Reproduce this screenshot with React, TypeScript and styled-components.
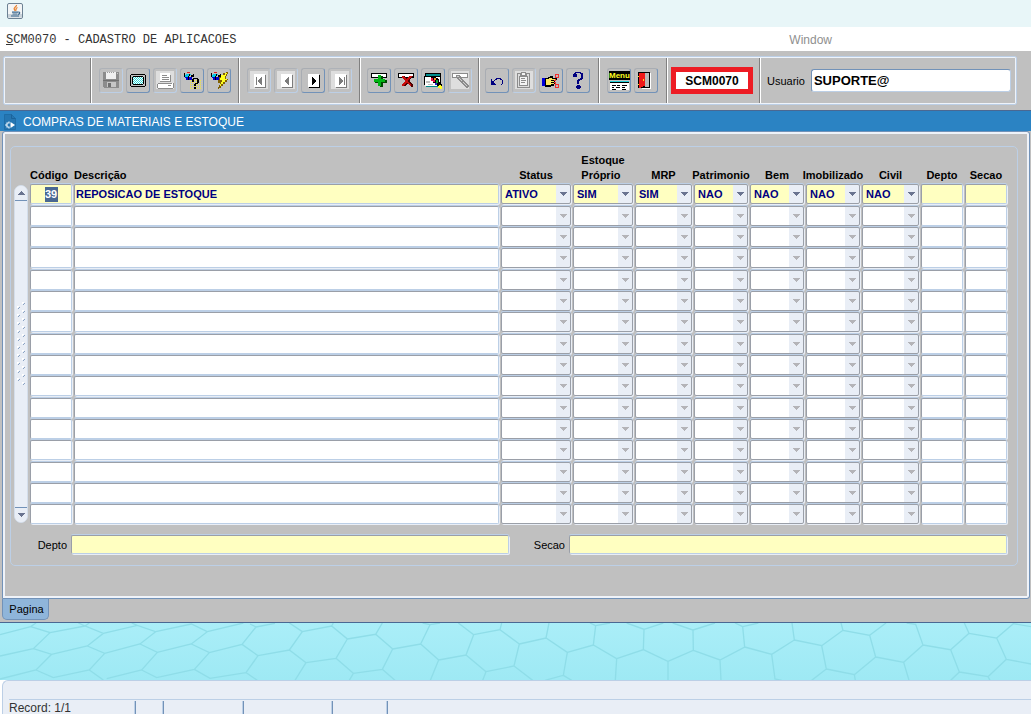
import React from 'react';
import styled, { createGlobalStyle, css } from 'styled-components';

const c = {
  gray: '#c0c0c0',
  line: '#bccfe6',
  light: '#e9eef6',
  edge: '#9a9fa8',
  blue: '#2b83c3',
  steel: '#7292b8',
  deep: '#4a6892',
  yellow: '#ffffc1',
  navy: '#000080',
};

const GlobalStyle = createGlobalStyle`
  *, *::before, *::after { box-sizing: border-box; }
  html, body { margin: 0; height: 100%; }
  body { font-family: "Liberation Sans", Arial, sans-serif; font-size: 11px; color: #000; }
  button, input, select { font: inherit; color: inherit; margin: 0; }
`;

const Page = styled.div`
  display: flex;
  flex-direction: column;
  min-height: 100vh;
  background: ${c.gray};
`;

const TitleStrip = styled.header`
  height: 27px;
  padding: 3px 7px;
  background: #e8f6f8;
`;

const MenuBar = styled.nav`
  display: flex;
  align-items: center;
  justify-content: space-between;
  height: 24px;
  padding: 1px 199px 0 6px;
  background: #fff;
`;

const MenuItem = styled.button<{ $mono?: boolean }>`
  border: 0;
  padding: 0;
  background: none;
  white-space: nowrap;
  font-size: 12px;
  line-height: 16px;
  color: #8f8f8f;
  ${p => p.$mono && css`
    font-family: "Liberation Mono", "Courier New", monospace;
    color: #333;
  `}
`;

const ToolbarArea = styled.div`
  padding: 5px 14px 5px 3px;
`;

const Toolbar = styled.div`
  display: flex;
  height: 49px;
  border: 1px solid ${c.line};
  border-radius: 2px;
  box-shadow: inset 0 0 0 1px #eef3fa;
`;

const Group = styled.div<{ $width?: number; $pad?: number }>`
  display: flex;
  align-items: center;
  gap: 3px;
  flex: ${p => (p.$width ? `0 0 ${p.$width}px` : '1 1 0')};
  margin: 1px 0;
  padding-left: ${p => p.$pad ?? 0}px;
  border-right: ${p => (p.$width ? '1px solid #fff' : '0')};
  box-shadow: ${p => (p.$width ? 'inset -1px 0 0 #808080' : 'none')};
`;

const ToolButton = styled.button`
  display: block;
  width: 24px;
  height: 25px;
  padding: 0;
  background: transparent;
  border: 1px solid;
  border-color: #a9adb3 ${c.steel} ${c.steel} #a9adb3;
  border-radius: 3px;
  &:disabled { border-color: #aeb2b8 ${c.line} ${c.line} #aeb2b8; }
  svg { display: block; }
`;

const ProgramCode = styled.output`
  display: flex;
  align-items: center;
  justify-content: center;
  width: 82px;
  height: 27px;
  border: 5px solid #ed1c24;
  background: #fff;
  font-weight: bold;
  font-size: 12px;
`;

const UserLabel = styled.label`
  margin-right: 3px;
  line-height: 16px;
`;

const UserInput = styled.input`
  flex: 1;
  min-width: 0;
  height: 23px;
  margin-right: 5px;
  padding: 0 2px;
  border: 1px solid;
  border-color: ${c.steel} ${c.line} ${c.line} ${c.steel};
  border-radius: 3px;
  background: #fff;
  font-weight: bold;
  font-size: 13px;
`;

const FormTitle = styled.h1`
  display: flex;
  align-items: center;
  gap: 7px;
  height: 21px;
  margin: 0;
  padding: 1px 4px 0;
  border-top: 1px solid ${c.deep};
  background: ${c.blue};
  color: #fff;
  font-size: 12px;
  line-height: 16px;
  font-weight: normal;
`;

const Canvas = styled.section`
  margin: 0 1px 0 2px;
  padding: 14px 11px 32px 7px;
  border: 1px solid ${c.steel};
  border-radius: 3px 3px 3px 0;
  box-shadow: inset 0 0 0 2px #eff3f9;
`;

const Frame = styled.div`
  padding: 0 9px 11px 3px;
  border: 1px solid ${c.line};
  border-radius: 5px;
`;

const RecordsBlock = styled.div`
  display: flex;
`;

const ScrollBar = styled.div`
  display: flex;
  flex-direction: column;
  flex: 0 0 14px;
  width: 14px;
  margin: 38px 1px 3px 0;
  border: 1px solid #d4deeb;
  border-radius: 7px;
  background: ${c.light};
  overflow: hidden;
`;

const ScrollButton = styled.button<{ $down?: boolean }>`
  display: flex;
  align-items: center;
  justify-content: center;
  height: 15px;
  padding: 0;
  border: 0;
  border-top: ${p => (p.$down ? `1px solid ${c.steel}` : '0')};
  border-bottom: ${p => (p.$down ? '0' : `1px solid ${c.steel}`)};
  background: ${c.light};
`;

const Thumb = styled.div`
  display: flex;
  flex: 1;
  align-items: center;
  justify-content: center;
  padding-bottom: 20px;
`;

const Grid = styled.table`
  flex: 1;
  width: 100%;
  table-layout: fixed;
  border-collapse: collapse;
  th { height: 37px; padding: 0 1px; vertical-align: bottom; }
  td { padding: 0 1px 1px; height: 21px; vertical-align: top; }
  tbody tr:nth-child(3n + 1) td { height: 22px; }
`;

const HeadLabel = styled.div<{ $left?: boolean }>`
  display: flex;
  justify-content: ${p => (p.$left ? 'flex-start' : 'center')};
  padding-bottom: 1px;
  font-weight: bold;
  font-size: 11px;
  line-height: 15px;
  text-align: left;
  white-space: pre;
`;

const fieldText = css`
  color: ${c.navy};
  font-weight: bold;
  font-size: 11px;
`;

const fieldBox = css`
  border: 1px solid;
  border-radius: 2px;
  box-shadow: 1px 1px 0 ${c.light}, 0 -1px 0 ${c.line};
`;

const Cell = styled.input<{ $active?: boolean; $marked?: boolean }>`
  ${fieldText}
  ${fieldBox}
  display: block;
  width: 100%;
  height: 20px;
  padding: 0 1px;
  border-color: ${c.edge} ${c.line} ${c.line} ${c.edge};
  background: ${p => (p.$active ? c.yellow : '#fff')};
  ${p => p.$marked && css`
    text-align: center;
    color: #fff;
    background: linear-gradient(${c.deep}, ${c.deep}) center / 13px 15px no-repeat ${c.yellow};
  `}
`;

const Combo = styled.div<{ $active?: boolean }>`
  ${fieldBox}
  display: grid;
  grid-template-columns: 1fr 14px;
  height: 20px;
  border-color: ${c.edge};
  background: linear-gradient(${c.light}, ${c.light}) right / 14px 100% no-repeat ${p => (p.$active ? c.yellow : '#fff')};
  select {
    ${fieldText}
    grid-area: 1 / 1 / 2 / 3;
    width: 100%;
    padding: 0 3px;
    border: 0;
    appearance: none;
    background: none;
    opacity: 1;
  }
  svg {
    grid-area: 1 / 2;
    place-self: center;
    pointer-events: none;
  }
`;

const Details = styled.div`
  display: grid;
  grid-template-columns: 57px 1fr 60px 1fr;
  align-items: center;
  margin: 9px 1px 0 0;
  label { justify-self: end; padding-right: 4px; }
`;

const DetailInput = styled.input`
  ${fieldText}
  ${fieldBox}
  width: 100%;
  height: 19px;
  padding: 0 3px;
  border-color: ${c.edge} ${c.line} ${c.line} ${c.edge};
  background: ${c.yellow};
`;

const TabStrip = styled.div`
  height: 24px;
  padding-left: 2px;
  border-bottom: 1px solid ${c.deep};
`;

const Tab = styled.button`
  display: block;
  width: 47px;
  height: 21px;
  padding: 0 0 0 2px;
  border: 1px solid ${c.steel};
  border-top: 0;
  border-radius: 0 0 5px 5px;
  background: #8fb5da;
`;

const Backdrop = styled.div`
  flex: 1;
  min-height: 57px;
  background: linear-gradient(#aaeef8, #9ee9f4);
  overflow: hidden;
  svg { display: block; width: 100%; height: 57px; }
`;

const StatusArea = styled.footer`
  background: #fff;
`;

const StatusBar = styled.div`
  margin-left: 2px;
  padding: 18px 0 0 6px;
  border: 1px solid ${c.line};
  border-width: 1px 0 0 1px;
  border-radius: 6px 0 0 0;
  background: ${c.light};
`;

const StatusCells = styled.div`
  display: flex;
  height: 15px;
  padding-top: 1px;
  border-top: 1px solid ${c.line};
`;

const StatusCell = styled.span<{ $width: number }>`
  width: ${p => p.$width}px;
  padding-top: 1px;
  border-right: 1px solid ${c.steel};
  box-shadow: inset -1px 0 0 ${c.line};
  font-size: 12px;
  line-height: 12px;
  color: #333;
`;

const JavaIcon = () => (
  <svg width="16" height="16" viewBox="0 0 16 16" aria-hidden="true">
    <rect x="0.5" y="0.5" width="15" height="15" rx="1.5" fill="#f3f5f6" stroke="#6d8294" />
    <path d="M1 11h14v3.5H1z" fill="#c9d3da" />
    <path d="M9.500 2c.6 1.800-3.400 2.600-2.200 4.400l1 1.600M10.500 4.500c-2 .9-1.800 1.500-1.200 2.900" fill="none" stroke="#e8822f" strokeWidth="1.300" />
    <path d="M5 9.200h6M5.500 11h5M4 13h8M11.200 9.200c2.300-.5 1.700 2-.2 2.200" fill="none" stroke="#3b678c" strokeWidth="1.200" />
  </svg>
);

const FormIcon = () => (
  <svg width="12" height="16" viewBox="0 0 12 16" aria-hidden="true">
    <path d="M0.500 0.500h7l4 4v11h-11z" fill="#2576b2" stroke="#1f6da7" />
    <path d="M7.500 0.500v4h4" fill="none" stroke="#1b639b" />
    <path d="M5 7.500v1.500H3v4h2v1.500M1 11h2" fill="none" stroke="#e6f1fa" strokeWidth="1.200" />
    <path d="M6.500 8l4.500 3-4.500 3z" fill="#fff" />
  </svg>
);

const Glyph = ({ children }: { children: React.ReactNode }) => (
  <svg width="22" height="23" viewBox="1 1 22 23" shapeRendering="crispEdges" aria-hidden="true">{children}</svg>
);

const Pad = () => <path fill="#dedede" d="M3 3h18v18H3z" />;

type DitherProps = { color: string; x: number; y: number; w: number; h: number; sparse?: boolean };

const Dither = ({ color, x, y, w, h, sparse }: DitherProps) => {
  let d = '';
  for (let j = 0; j < h; j += sparse ? 2 : 1) {
    for (let i = j % 2; i < w; i += 2) d += `M${x + i} ${y + j}h1v1h-1z`;
  }
  return <path fill={color} d={d} />;
};

const SaveIcon = () => (
  <Glyph>
    <path fill="#8c8c8c" d="M4 4h16v16H5v-1H4z" />
    <path fill="#f0f0f0" d="M7 4h10v7H7z" />
    <path fill="#9c9c9c" d="M8 4h1v1H8zM10 4h1v1h-1zM12 4h1v1h-1zM14 4h1v1h-1z" />
    <path fill="#c6c6c6" d="M8 14h9v5H8zM18 5h1v1h-1z" />
    <path fill="#707070" d="M9 15h3v4H9zM4 12h16v1H4z" />
  </Glyph>
);

const ScreenIcon = () => (
  <Glyph>
    <path fill="#000" d="M5 6h14v1H5zM5 18h14v1H5zM4 7h1v11H4zM19 7h1v11h-1zM7 8h10v1H7zM7 16h10v1H7zM6 9h1v7H6zM17 9h1v7h-1z" />
    <path fill="#fff" d="M7 9h10v7H7z" />
    <Dither color="#30d8d8" x={7} y={9} w={10} h={7} />
  </Glyph>
);

const PrintIcon = () => (
  <Glyph>
    <Pad />
    <path fill="#fff" d="M7 5h10v8H7zM5 15h15v5H5z" />
    <path fill="#8c8c8c" d="M9 7h5v1H9zM9 9h7v1H9zM9 11h7v1H9zM17 7h1v7h-1zM7 13h11v1H7zM5 15h14v1H5zM4 16h1v4H4zM5 20h15v1H5zM15 17h3v1h-3zM20 15h1v5h-1z" />
  </Glyph>
);

const Torch = () => (
  <>
    <path fill="#00c8e8" d="M6 6h5v1H6zM5 7h4v2H5z" />
    <path fill="#0000d0" d="M5 9h3v1H5zM6 10h2v2H6zM9 9h3v3H9z" />
    <path fill="#000" d="M4 5h1v4H4zM9 6h1v2H9zM11 7h2v2h-2zM8 8h1v4H8zM13 6h1v3h-1z" />
    <path fill="#e02020" d="M7 4h3v1H7z" />
  </>
);

const EnterQueryIcon = () => (
  <Glyph>
    <Dither color="#f0e840" x={10} y={12} w={12} h={10} sparse />
    <Torch />
    <path fill="#000" d="M13 10h5v1h-5zM12 11h2v3h-2zM17 11h2v4h-2zM15 15h3v1h-3zM14 16h2v2h-2zM14 19h2v2h-2z" />
  </Glyph>
);

const ExecuteQueryIcon = () => (
  <Glyph>
    <Torch />
    <path fill="#806000" d="M19 4h2v2h-1v2h-1v3h2v1h-1v2h-2v2h-2v2h-2v2h-2v1h-1v-2h1v-2h1v-2h-2v-3h1v-3h2V7h2V5h2z" />
    <path fill="#ffff20" d="M18 5h2v1h-1v2h-1v3h2v1h-2v2h-2v2h-2v2h-1v-2h1v-2h1v-2h-2v-2h1v-3h2V7h2z" />
  </Glyph>
);

const NavIcon = ({ kind }: { kind: 'first' | 'prev' | 'next' | 'last' }) => {
  const off = kind !== 'next';
  const left = kind === 'first' || kind === 'prev';
  return (
    <Glyph>
      {off && <Pad />}
      <path fill="#fff" d="M7 6h11v13H7z" />
      <path fill={off ? '#7c7c7c' : '#000'} d="M18 7h1v13H8v-1h10z" />
      <path
        fill={off ? '#7c7c7c' : '#000'}
        d={left
          ? 'M14 9h1v8h-1v-1h-1v-1h-1v-1h-1v-2h1v-1h1v-1h1z'
          : 'M11 9h1v1h1v1h1v1h1v2h-1v1h-1v1h-1v1h-1z'}
      />
      {kind === 'first' && <path fill="#7c7c7c" d="M9 9h1v8H9z" />}
      {kind === 'last' && <path fill="#7c7c7c" d="M16 9h1v8h-1z" />}
    </Glyph>
  );
};

const RowStrip = () => (
  <>
    <path fill="#000" d="M4 5h16v5H4z" />
    <path fill="#fff" d="M5 6h14v3H5z" />
  </>
);

const InsertIcon = () => (
  <Glyph>
    <RowStrip />
    <path fill="#004800" d="M12 8h4v4h4v3h-4v4h-3v-4H8v-3h4z" />
    <path fill="#00b414" d="M11 7h3v4h4v3h-4v4h-3v-4H7v-3h4z" />
  </Glyph>
);

const DeleteIcon = () => (
  <Glyph>
    <RowStrip />
    <path fill="#500000" d="M9 8h2v1h1v1h2V9h1V8h4v1h-1v1h-1v1h-1v3h1v1h1v1h1v3h-2v-1h-1v-1h-1v-1h-2v1h-1v1H8v-2h1v-1h1v-1h1v-2h-1v-1H9z" />
    <path fill="#c80c0c" d="M8 8h2v1h1v1h1v1h1v-1h1V9h1V8h3v1h-1v1h-1v1h-1v1h-1v2h1v1h1v1h1v2h-1v-1h-1v-1h-1v-1h-2v1h-1v1h-1v1H8v-2h1v-1h1v-1h1v-2h-1v-1H9v-1H8z" />
  </Glyph>
);

const ClearFormIcon = () => (
  <Glyph>
    <path fill="#000" d="M4 5h16v12H3V8h1z" />
    <path fill="#fff" d="M4 9h15v9H4z" />
    <path fill="#008c8c" d="M5 6h14v2H5zM5 18h14v1H5z" />
    <path fill="#c0c0c0" d="M5 13h4v2H5zM7 16h5v1H7z" />
    <path fill="#000" d="M10 9h5v1h2v1h1v3h2v2h1v3h-3v-1h-2v-2h-2v-1h-2v-2h-2z" />
    <path fill="#e8104c" d="M10 10h2v3h-2zM12 12h2v2h-2z" />
    <path fill="#f09020" d="M13 10h2v2h-2z" />
    <path fill="#10a030" d="M15 12h2v3h-2z" />
    <path fill="#2020d0" d="M14 15h2v2h-2z" />
    <path fill="#ffff20" d="M18 17h2v1h1v3h-2v-1h-2v-2h1z" />
  </Glyph>
);

const ClearFieldIcon = () => (
  <Glyph>
    <Pad />
    <path fill="#8c8c8c" d="M4 5h16v5H4z" />
    <path fill="#fff" d="M5 6h14v3H5z" />
    <path fill="#8c8c8c" d="M8 7h4v1h1v2h1v1h1v1h1v1h1v1h1v1h1v1h1v1h1v2h-1v1h-2v-1h-1v-1h-1v-1h-1v-1h-1v-1h-1v-1h-1v-1h-1v-1h-1v-1H9v-1H8z" />
    <path fill="#d0d0d0" d="M9 8h2v1H9zM11 10h1v1h1v1h1v1h-1v-1h-1v-1h-1zM15 14h1v1h1v1h1v1h1v1h-1v-1h-1v-1h-1v-1h-1z" />
  </Glyph>
);

const UndoIcon = () => (
  <Glyph>
    <path fill={c.navy} d="M6 11h1v2h1v1h1v1h1v1h1v1H6zM9 12h1v1H9zM8 13h1v1H8zM10 11h2v1h-2zM11 10h5v1h-5zM15 11h2v1h-2zM17 12h1v4h-1zM16 16h1v1h-1z" />
  </Glyph>
);

const PasteIcon = () => (
  <Glyph>
    <Pad />
    <path fill="#8c8c8c" d="M5 5h4V4h5v1h4v15H5z" />
    <path fill="#dedede" d="M6 6h11v13H6z" />
    <path fill="#8c8c8c" d="M8 6h7v2h1v10H7V8h1z" />
    <path fill="#f4f4f4" d="M8 9h7v8H8zM10 5h3v2h-3z" />
    <path fill="#8c8c8c" d="M9 10h4v1H9zM9 12h5v1H9zM9 14h4v1H9z" />
  </Glyph>
);

const CutIcon = () => (
  <Glyph>
    <path fill="#0000d8" d="M3 10h3v8H3z" />
    <path fill="#000" d="M6 10h3V9h2V8h3v2h4v2h-2v2h1v2h-2v2h-3v1H6z" />
    <path fill="#ffe860" d="M7 11h3v-1h3v1h4v1h-5v1h3v1h-3v1h3v1h-3v1H7z" />
    <path fill="none" stroke="#f03030" d="M15.500 12.500l2-1M15.500 14.500l2 1M16.500 9.500v-3h3v3zM16.500 16.500v3h3v-3z" />
  </Glyph>
);

const HelpIcon = () => (
  <Glyph>
    <path fill={c.navy} d="M9 4h6v1h2v6h-1v1h-2v1h-1v3h-2v-4h1v-1h2v-1h1V6h-1V5h-4v1h1v3H7V6h1V5h1zM11 17h3v1h1v2h-1v1h-3v-1h-1v-2h1z" />
  </Glyph>
);

const MenuIcon = () => (
  <Glyph>
    <path fill="#000" d="M2 3h21v9H2z" />
    <text x="2" y="10" fill="#ffff20" fontFamily="Liberation Sans, Arial, sans-serif" fontSize="8" fontWeight="bold">Menu</text>
    <path fill="#20d0d8" d="M3 13h19v1H3z" />
    <path fill="#fff" d="M3 15h19v7H3z" />
    <path fill="#000" d="M3 14h19v1H3zM5 17h4v1H5zM10 17h3v1h-3zM15 17h5v1h-5zM5 19h2v1H5zM9 19h4v1H9zM15 19h3v1h-3zM5 21h4v1H5zM15 21h4v1h-4z" />
  </Glyph>
);

const ExitIcon = () => (
  <Glyph>
    <path fill="#000" d="M4 4h12v16H4z" />
    <path fill="#fff" d="M16 5h1v16H8v-1h8z" />
    <path fill="#b8b8b8" d="M11 5h4v14h-4z" />
    <path fill="#f01818" d="M5 5h6v13H9v1H7v1H5z" />
    <path fill="#ffe020" d="M4 8h1v1H4zM4 16h1v1H4zM9 11h1v2H9z" />
  </Glyph>
);

const Triangle = ({ color, up }: { color: string; up?: boolean }) => (
  <svg width="7" height="4" viewBox="0 0 7 4" shapeRendering="crispEdges" aria-hidden="true">
    <path fill={color} d={up ? 'M3 0h1v1h1v1h1v1h1v1H0V3h1V2h1V1h1z' : 'M0 0h7v1H6v1H5v1H4v1H3V3H2V2H1V1H0z'} />
  </svg>
);

const Grip = () => (
  <svg width="8" height="84" viewBox="0 0 8 84" shapeRendering="crispEdges" aria-hidden="true">
    {Array.from({ length: 21 }, (_, i) => {
      const x = i % 2 ? 0 : 5;
      return (
        <g key={i}>
          <path fill="#fff" d={`M${x} ${i * 4}h2v1h-1v1h-1z`} />
          <path fill="#8aa3c4" d={`M${x + 1} ${i * 4 + 2}h1v-1h1v1h-1v1h-1z`} />
        </g>
      );
    })}
  </svg>
);

const hexPaths = [
  'M0 35L92 11L108 0M92 11L150 29L100 77L0 99M150 29L255 9L310 31L262 69L155 94L100 77M255 9L268 0M255 9L235 0',
  'M310 31L412 7L467 26L420 63L314 91L262 69M412 7L395 0M467 26L574 3L622 26L574 63L472 88L420 63M622 26L730 0',
  'M768 12L750 3M768 12L726 64L628 89L574 63M768 12L825 1M726 64L774 98L738 149L772 172',
  'M155 94L108 141L0 168M108 141L160 164L268 141L314 91M268 141L310 171M472 88L425 141L320 167M425 141L470 164L583 139L628 89M583 139L630 166L738 149',
  'M774 98L868 81L918 119L885 172M868 81L907 26L995 9L1042 48L1008 106L918 119M907 26L868 0M995 9L1000 0',
  'M1042 48L1127 34L1178 78L1147 139L1060 151L1008 106M1060 151L1048 172M1127 34L1147 0M1178 78L1262 63L1316 111L1291 172M1147 139L1185 172M1262 63L1290 5L1268 0M1290 5L1320 0',
  'M1316 111L1398 96L1458 146L1448 172M1398 96L1421 35L1375 0M1421 35L1500 20L1505 0M1500 20L1558 63L1542 129L1458 146M1542 129L1598 172',
  'M1558 63L1638 45L1702 88L1690 157L1635 172M1690 157L1715 172M1638 45L1647 0M1702 88L1780 66L1850 107L1846 172M1780 66L1787 8L1770 0M1787 8L1830 0',
  'M1850 107L1930 80L1932 19L1880 0M1932 19L1990 0M1930 80L2004 115V172M2004 115L2080 82L2079 21L2018 0M2079 21L2145 0',
  'M2228 11L2205 0M2228 11L2275 0M2228 11L2234 72L2160 111L2080 82M2160 111L2163 172M2234 72L2315 94L2325 168L2345 172M2315 94L2383 51L2376 0',
  'M2383 51L2465 68L2479 138L2435 172M2479 138L2563 155L2566 172M2563 155L2627 102L2609 37L2529 22L2523 0M2529 22L2465 68M2609 37L2658 0',
  'M2627 102L2711 118L2727 172M2711 118L2769 66L2747 4L2720 0M2769 66L2852 80L2907 31L2893 0M2852 80L2878 147L2852 172M2878 147L2964 161L2970 172M2964 161L3019 109L2990 45L2907 31M2990 45L3040 2L3093 11M3019 109L3093 123',
];

type Tool = { label: string; icon: React.ReactNode; off?: boolean };

const toolGroups: { width: number; pad: number; tools: Tool[] }[] = [
  { width: 148, pad: 7, tools: [
    { label: 'Salvar', icon: <SaveIcon />, off: true },
    { label: 'Tela', icon: <ScreenIcon /> },
    { label: 'Imprimir', icon: <PrintIcon />, off: true },
    { label: 'Entrar consulta', icon: <EnterQueryIcon /> },
    { label: 'Executar consulta', icon: <ExecuteQueryIcon /> },
  ] },
  { width: 121, pad: 7, tools: [
    { label: 'Primeiro', icon: <NavIcon kind="first" />, off: true },
    { label: 'Anterior', icon: <NavIcon kind="prev" />, off: true },
    { label: 'Próximo', icon: <NavIcon kind="next" /> },
    { label: 'Último', icon: <NavIcon kind="last" />, off: true },
  ] },
  { width: 119, pad: 6, tools: [
    { label: 'Inserir', icon: <InsertIcon /> },
    { label: 'Excluir', icon: <DeleteIcon /> },
    { label: 'Limpar tela', icon: <ClearFormIcon /> },
    { label: 'Limpar campo', icon: <ClearFieldIcon />, off: true },
  ] },
  { width: 120, pad: 5, tools: [
    { label: 'Desfazer', icon: <UndoIcon /> },
    { label: 'Colar', icon: <PasteIcon />, off: true },
    { label: 'Recortar', icon: <CutIcon /> },
    { label: 'Ajuda', icon: <HelpIcon /> },
  ] },
  { width: 68, pad: 7, tools: [
    { label: 'Menu', icon: <MenuIcon /> },
    { label: 'Sair', icon: <ExitIcon /> },
  ] },
];

type Column = { title: string; width?: number; combo?: boolean; left?: boolean; value: string };

const columns: Column[] = [
  { title: 'Código', width: 44, left: true, value: '39' },
  { title: 'Descrição', left: true, value: 'REPOSICAO DE ESTOQUE' },
  { title: 'Status', width: 72, combo: true, value: 'ATIVO' },
  { title: 'Estoque\nPróprio', width: 62, combo: true, value: 'SIM' },
  { title: 'MRP', width: 59, combo: true, value: 'SIM' },
  { title: 'Patrimonio', width: 56, combo: true, value: 'NAO' },
  { title: 'Bem', width: 56, combo: true, value: 'NAO' },
  { title: 'Imobilizado', width: 56, combo: true, value: 'NAO' },
  { title: 'Civil', width: 59, combo: true, value: 'NAO' },
  { title: 'Depto', width: 44, value: '' },
  { title: 'Secao', width: 44, value: '' },
];

const ROWS = 16;

export default function App() {
  return (
    <Page>
      <GlobalStyle />
      <TitleStrip><JavaIcon /></TitleStrip>
      <MenuBar>
        <MenuItem $mono><u>S</u>CM0070 - CADASTRO DE APLICACOES</MenuItem>
        <MenuItem>Window</MenuItem>
      </MenuBar>
      <ToolbarArea>
        <Toolbar>
          <Group $width={88} />
          {toolGroups.map((g, i) => (
            <Group key={i} $width={g.width} $pad={g.pad}>
              {g.tools.map(t => (
                <ToolButton key={t.label} aria-label={t.label} disabled={t.off}>{t.icon}</ToolButton>
              ))}
            </Group>
          ))}
          <Group $width={93} $pad={3}><ProgramCode>SCM0070</ProgramCode></Group>
          <Group $pad={6}>
            <UserLabel htmlFor="usuario">Usuario</UserLabel>
            <UserInput id="usuario" defaultValue="SUPORTE@" />
          </Group>
        </Toolbar>
      </ToolbarArea>
      <FormTitle><FormIcon />COMPRAS DE MATERIAIS E ESTOQUE</FormTitle>
      <Canvas>
        <Frame>
          <RecordsBlock>
            <ScrollBar>
              <ScrollButton aria-label="Subir"><Triangle color="#6a7490" up /></ScrollButton>
              <Thumb><Grip /></Thumb>
              <ScrollButton $down aria-label="Descer"><Triangle color="#6a7490" /></ScrollButton>
            </ScrollBar>
            <Grid>
              <colgroup>
                {columns.map(col => <col key={col.title} width={col.width} />)}
              </colgroup>
              <thead>
                <tr>
                  {columns.map(col => (
                    <th key={col.title} scope="col"><HeadLabel $left={col.left}>{col.title}</HeadLabel></th>
                  ))}
                </tr>
              </thead>
              <tbody>
                {Array.from({ length: ROWS }, (_, r) => (
                  <tr key={r}>
                    {columns.map((col, i) => {
                      const active = r === 0;
                      const name = `${col.title.replace('\n', ' ')} ${r + 1}`;
                      return (
                        <td key={col.title}>
                          {col.combo ? (
                            <Combo $active={active}>
                              <select aria-label={name} disabled={!active}>
                                <option>{active ? col.value : ''}</option>
                              </select>
                              <Triangle color={active ? '#6a7490' : '#b4b4b8'} />
                            </Combo>
                          ) : (
                            <Cell
                              aria-label={name}
                              $active={active}
                              $marked={active && i === 0}
                              defaultValue={active ? col.value : ''}
                            />
                          )}
                        </td>
                      );
                    })}
                  </tr>
                ))}
              </tbody>
            </Grid>
          </RecordsBlock>
          <Details>
            <label htmlFor="depto">Depto</label>
            <DetailInput id="depto" />
            <label htmlFor="secao">Secao</label>
            <DetailInput id="secao" />
          </Details>
        </Frame>
      </Canvas>
      <TabStrip><Tab>Pagina</Tab></TabStrip>
      <Backdrop>
        <svg viewBox="0 0 3093 171" preserveAspectRatio="xMinYMin slice" aria-hidden="true">
          <path d={hexPaths.join('')} fill="none" stroke="#8fdde8" strokeWidth="4" />
        </svg>
      </Backdrop>
      <StatusArea>
        <StatusBar>
          <StatusCells>
            <StatusCell $width={127}>Record: 1/1</StatusCell>
            <StatusCell $width={28} />
            <StatusCell $width={80} />
            <StatusCell $width={89} />
            <StatusCell $width={55} />
          </StatusCells>
        </StatusBar>
      </StatusArea>
    </Page>
  );
}
